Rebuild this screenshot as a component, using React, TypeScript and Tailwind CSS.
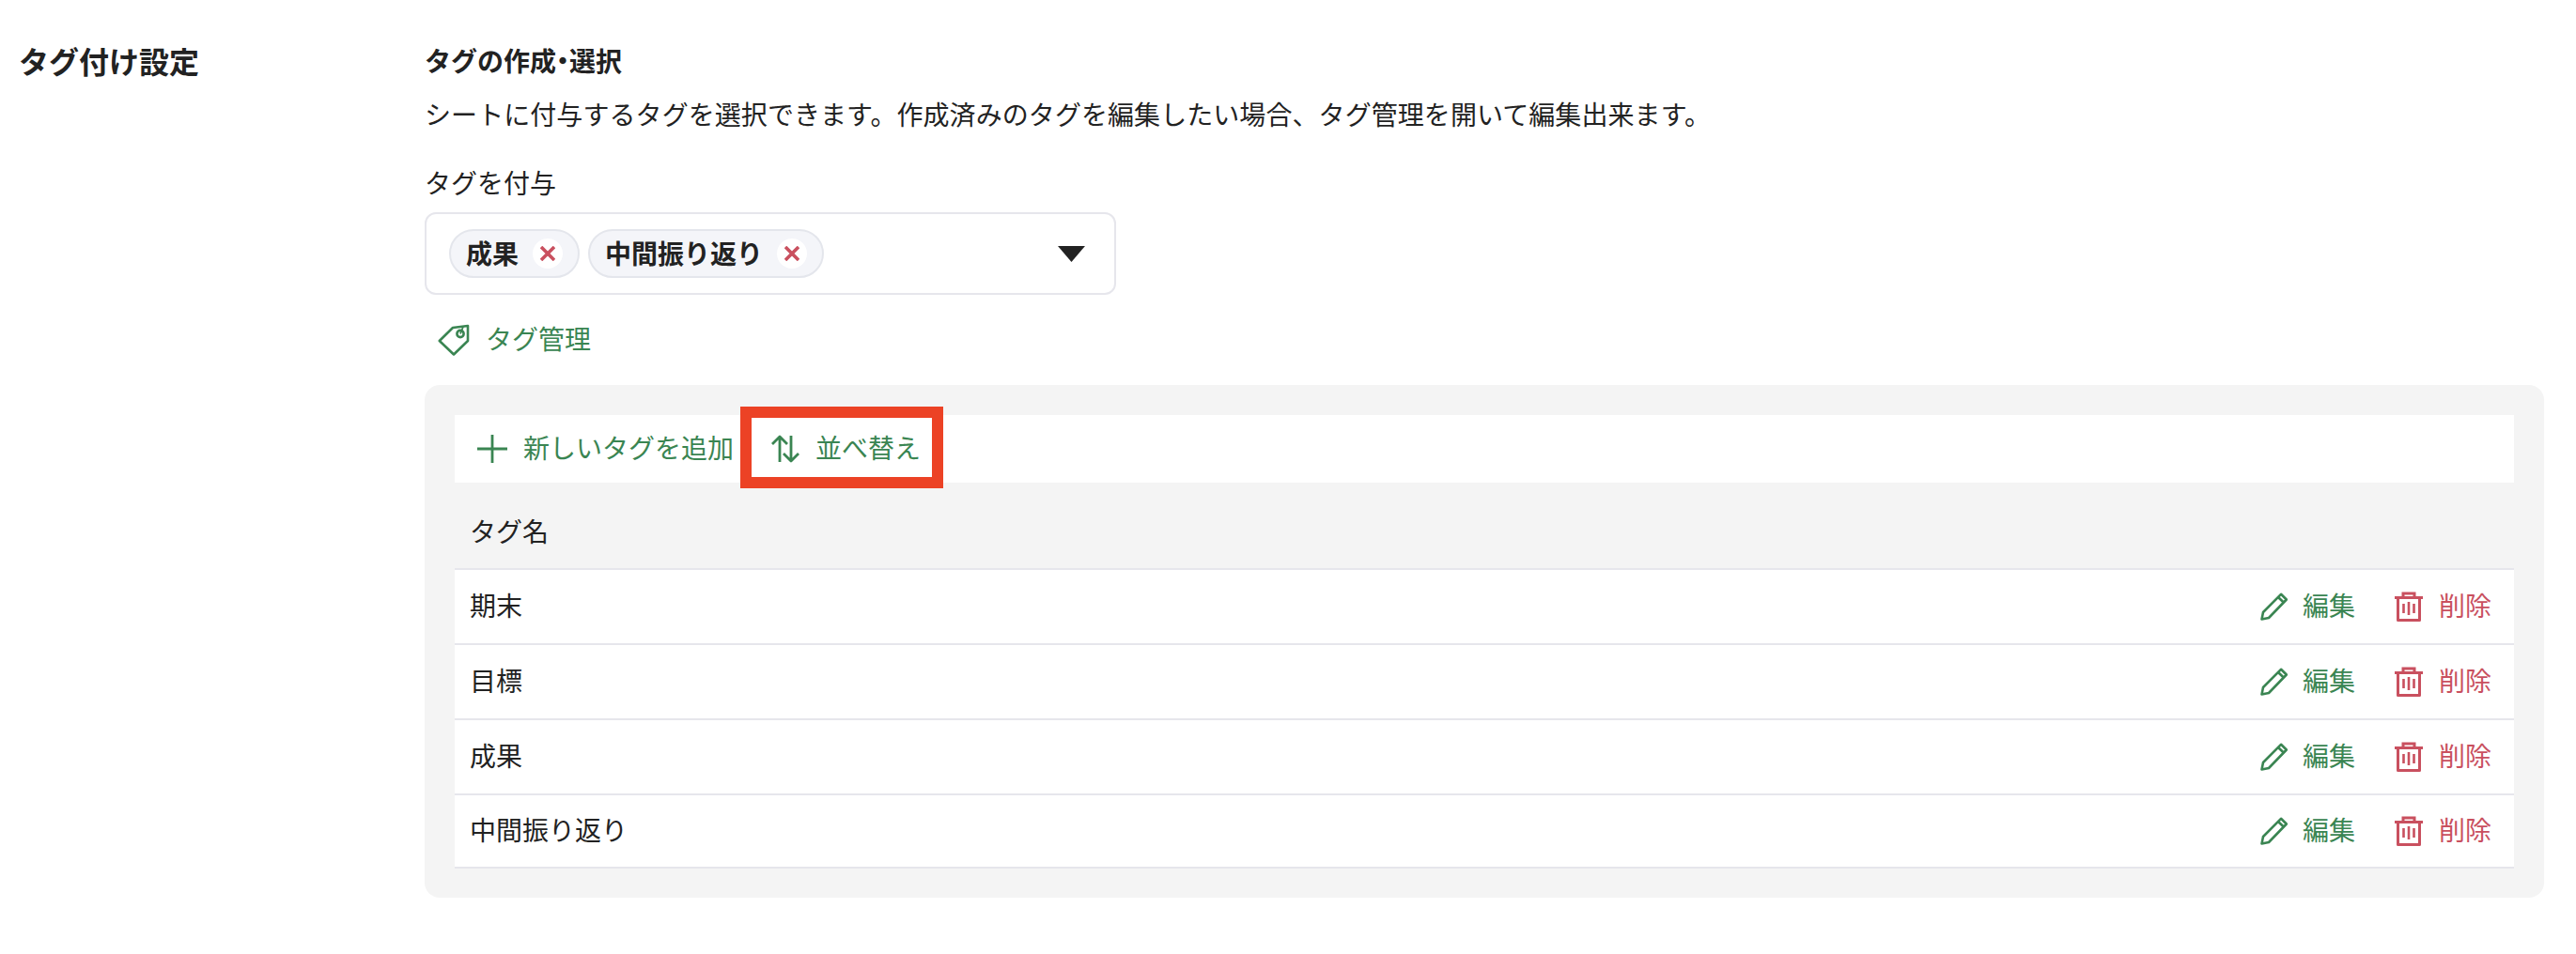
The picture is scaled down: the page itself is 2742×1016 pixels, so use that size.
const tags = ['期末', '目標', '成果', '中間振り返り']
const selected = ['成果', '中間振り返り']

function TagIcon() {
  return (
    <svg width="34" height="34" viewBox="0 0 34 34" fill="none" stroke="currentColor" strokeWidth="2.6" strokeLinejoin="round">
      <path d="M1.8 18 L16 4 L32 2 L32 18 L17 32.5 Z" />
      <circle cx="24" cy="10.5" r="3.6" />
      <path d="M24 10.5 L27 3" strokeWidth="1.8" />
    </svg>
  )
}

function PlusIcon() {
  return (
    <svg width="32" height="32" viewBox="0 0 32 32" fill="none" stroke="currentColor" strokeWidth="2.8">
      <path d="M16 1 V31 M0 16 H32" />
    </svg>
  )
}

function SortIcon() {
  return (
    <svg width="30" height="30" viewBox="0 0 30 30" fill="none" stroke="currentColor" strokeWidth="2.8" strokeLinejoin="round">
      <path d="M9 29 V2 M1 10 L9 2 L17 10" />
      <path d="M21 1 V28 M13 20 L21 28 L29 20" />
    </svg>
  )
}

function PencilIcon() {
  return (
    <svg width="29" height="30" viewBox="0 0 29 30" fill="none" stroke="currentColor" strokeWidth="2.6" strokeLinejoin="round">
      <path d="M1.5 28.5 L3 21 L22 1.8 L27.8 7.5 L9 27 Z" />
      <path d="M19 5 L25 10.8" />
    </svg>
  )
}

function TrashIcon() {
  return (
    <svg width="32" height="32" viewBox="0 0 32 32" fill="none" stroke="currentColor" strokeWidth="3">
      <path d="M1 6.5 H31" />
      <path d="M10 6.5 V2 H22 V6.5" />
      <path d="M4.5 6.5 V30.5 H27.5 V6.5" strokeLinejoin="round" />
      <path d="M10.5 13 V23 M16 11 V25 M21.5 13 V23" strokeWidth="2.6" />
    </svg>
  )
}

function Pill({ label }: { label: string }) {
  return (
    <div className="flex h-[52px] items-center gap-[15px] rounded-full border-2 border-[#e4e6ec] bg-[#f4f5f9] pr-4 pl-4">
      <span className="pb-[3px] text-[28px] leading-none font-bold text-[#222]">{label}</span>
      <span className="flex h-8 w-8 items-center justify-center rounded-full bg-white">
        <svg width="16" height="16" viewBox="0 0 16 16" stroke="#c9505f" strokeWidth="3.6">
          <path d="M1 1 L15 15 M15 1 L1 15" />
        </svg>
      </span>
    </div>
  )
}

function TagRow({ name }: { name: string }) {
  return (
    <div className="flex h-20 items-center justify-between border-t-2 border-[#e6e6ec] bg-white pr-6 pl-4 last:h-[78px]">
      <span className="pb-1 text-[28px] text-[#222]">{name}</span>
      <div className="flex items-center gap-[41px]">
        <button className="flex items-center gap-4 text-[28px] text-[#3a8552]">
          <PencilIcon />
          <span className="pb-1">編集</span>
        </button>
        <button className="flex items-center gap-4 text-[28px] text-[#c9505f]">
          <TrashIcon />
          <span className="pb-1">削除</span>
        </button>
      </div>
    </div>
  )
}

export default function App() {
  return (
    <div className="flex h-[1016px] bg-white pt-[45px] pr-[34px] font-['Noto_Sans_CJK_JP','Noto_Sans',sans-serif]">
      <div className="w-[452px] shrink-0 pl-5">
        <h2 className="text-[32px] leading-[38px] font-bold text-[#222]">タグ付け設定</h2>
      </div>

      <div className="flex-1">
        <h3 className="text-[28px] leading-[38px] font-bold text-[#222]">
          タグの作成<span className="[font-feature-settings:'palt']">・</span>選択
        </h3>
        <p className="mt-[19px] text-[28px] leading-[38px] tracking-[0.07px] text-[#222]">
          シートに付与するタグを選択できます。作成済みのタグを編集したい場合、タグ管理を開いて編集出来ます。
        </p>

        <label className="mt-[35px] block text-[28px] leading-[38px] text-[#222]">タグを付与</label>
        <div className="mt-[13px] flex h-[88px] w-[736px] items-center justify-between rounded-xl border-2 border-[#e6e6ec] bg-white pr-[31px] pl-6">
          <div className="flex gap-[9px]">
            {selected.map((s) => (
              <Pill key={s} label={s} />
            ))}
          </div>
          <svg width="29" height="17" viewBox="0 0 29 17" fill="#222">
            <path d="M0 0 H29 L14.5 17 Z" />
          </svg>
        </div>

        <button className="mt-[27px] flex items-center gap-[17px] pl-[14px] text-[28px] leading-[38px] text-[#3a8552]">
          <TagIcon />
          <span className="pb-1">タグ管理</span>
        </button>

        <div className="mt-[27px] rounded-2xl bg-[#f4f4f4] px-8 pt-8 pb-[31px]">
          <div className="flex h-[72px] items-stretch gap-10 bg-white pl-6">
            <button className="flex items-center gap-[17px] text-[28px] text-[#3a8552]">
              <PlusIcon />
              <span className="pb-1">新しいタグを追加</span>
            </button>
            <button className="relative flex items-center gap-[17px] text-[28px] text-[#3a8552]">
              <SortIcon />
              <span className="pb-1">並べ替え</span>
              <span className="pointer-events-none absolute -top-[9px] -right-6 -bottom-[6px] -left-[33px] border-[12px] border-[#ec4225]" />
            </button>
          </div>

          <div className="flex h-[91px] items-center pt-[10px] pl-4 text-[28px] text-[#222]">タグ名</div>

          <div className="border-b-2 border-[#e6e6ec]">
            {tags.map((t) => (
              <TagRow key={t} name={t} />
            ))}
          </div>
        </div>
      </div>
    </div>
  )
}
